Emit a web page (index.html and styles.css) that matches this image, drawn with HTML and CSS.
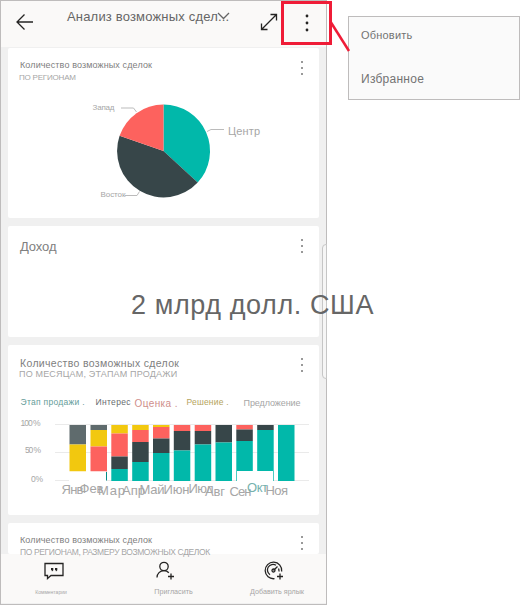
FILE: index.html
```html
<!DOCTYPE html>
<html lang="ru">
<head>
<meta charset="utf-8">
<title>Анализ возможных сделок</title>
<link rel="stylesheet" href="styles.css">
</head>
<body>
<div class="stage">
  <main class="phone">
    <header class="topbar">
      <svg class="back" width="18" height="18" viewBox="0 0 18 18"><path d="M17 9H1.500M8.500 1.500L1 9l7.500 7.500"/></svg>
      <h1>Анализ возможных сдел...</h1>
      <svg class="chevron" width="13" height="8" viewBox="0 0 13 8"><path d="M1 1l5.500 5.500L12 1"/></svg>
      <svg class="expand" width="18" height="18" viewBox="0 0 18 18"><path d="M1.500 16.500l15-15M10.500 1.500h6v6M1.500 10.500v6h6"/></svg>
      <svg class="more-top" width="4" height="18" viewBox="0 0 4 18"><circle cx="2" cy="2" r="1.400"/><circle cx="2" cy="9" r="1.400"/><circle cx="2" cy="16" r="1.400"/></svg>
    </header>
    <section class="feed">
      <article class="card card-pie">
        <div class="card-head">
          <div class="titles"><h2 class="t-small">Количество возможных сделок</h2><p class="s-region">ПО РЕГИОНАМ</p></div>
          <div class="dots"><i></i><i></i><i></i></div>
        </div>
        <svg class="pie" width="311" height="120" viewBox="8 90 311 120">
          <path fill="#01b8aa" d="M163.500 151V104.500A46.500 46.500 0 0 1 197.700 182.500Z"/>
          <path fill="#374649" d="M163.500 151L197.700 182.500A46.500 46.500 0 0 1 119.600 135.800Z"/>
          <path fill="#fd625e" d="M163.500 151L119.600 135.800A46.500 46.500 0 0 1 163.500 104.500Z"/>
          <g class="leader"><path d="M121 108h12.500l3 4M207 131.500l4-2h13M125 195.500h12l2.500-4"/></g>
          <text x="92.500" y="110" font-size="8" textLength="22">Запад</text>
          <text x="228" y="134.500" font-size="11" textLength="32">Центр</text>
          <text x="100.500" y="197" font-size="8" textLength="25">Восток</text>
        </svg>
      </article>
      <article class="card card-income">
        <div class="card-head">
          <div class="titles"><h2 class="t-income">Доход</h2></div>
          <div class="dots"><i></i><i></i><i></i></div>
        </div>
        <p class="income">2 млрд долл. США</p>
      </article>
      <article class="card card-bars">
        <div class="card-head">
          <div class="titles"><h2 class="t-bars">Количество возможных сделок</h2><p class="s-bars">ПО МЕСЯЦАМ, ЭТАПАМ ПРОДАЖИ</p></div>
          <div class="dots"><i></i><i></i><i></i></div>
        </div>
        <svg class="bars" width="311" height="120" viewBox="8 390 311 120">
          <text class="c-stage" x="20.500" y="405" font-size="8.500" textLength="64">Этап продажи .</text>
          <text class="c-interest" x="95.500" y="405" font-size="8.500" textLength="35">Интерес</text>
          <text class="c-rate" x="134.500" y="407" font-size="10" textLength="43">Оценка .</text>
          <text class="c-decision" x="186.500" y="405" font-size="8.500" textLength="42">Решение .</text>
          <text x="243.500" y="406" font-size="9" textLength="57">Предложение</text>
          <path stroke="#eaeaea" d="M55 424.500H309M55 452.500H309M55 480.500H309"/>
          <path fill="#5f6b6d" d="M69.500 425h16.500v19.500h-16.500zM90.500 425h16.500v5h-16.500z"/>
          <path fill="#f2c80f" d="M69.500 444.500h16.500v27h-16.500zM90.500 430h16.500v16.500h-16.500zM111.300 425h16.500v8.500h-16.500zM132.200 425h16.500v5h-16.500zM153 425h16.500v2h-16.500z"/>
          <path fill="#fd625e" d="M90.500 446.500h16.500v25h-16.500zM111.300 433.500h16.500v23h-16.500zM132.200 430h16.500v12h-16.500zM153 427h16.500v11.500h-16.500zM173.800 425h16.500v6h-16.500zM194.700 425h16.500v6h-16.500zM236.300 425h16.500v4.500h-16.500z"/>
          <path fill="#374649" d="M111.300 456.500h16.500v12.500h-16.500zM132.200 442h16.500v20h-16.500zM153 438.500h16.500v14.500h-16.500zM173.800 431h16.500v19.500h-16.500zM194.700 431h16.500v13.500h-16.500zM215.500 425h16.500v17.500h-16.500zM236.300 429.500h16.500v11.500h-16.500zM257.200 425h16.500v5h-16.500z"/>
          <path fill="#01b8aa" d="M111.300 469h16.500v12h-16.500zM132.200 462h16.500v19h-16.500zM153 453h16.500v28h-16.500zM173.800 450.500h16.500v30.500h-16.500zM194.700 444.500h16.500v36.500h-16.500zM215.500 442.500h16.500v38.500h-16.500zM236.300 441h16.500v40h-16.500zM257.200 430h16.500v51h-16.500zM278 425h16.500v56h-16.500z"/>
          <path fill="#fff" d="M69 471.500h37v10H69zM237 471h36v11h-36z"/>
          <path stroke="#018d87" d="M106.500 472v8.500"/>
          <g font-size="8.500"><text x="20.500" y="426" textLength="20">100 %</text><text x="25" y="453" textLength="16">50 %</text><text x="31" y="482" textLength="12">0 %</text></g>
          <g class="months" font-size="13">
            <text x="61.500" y="494" textLength="22">Янв</text><text x="79.500" y="493" textLength="24">Фев</text>
            <text x="98" y="495" textLength="27">Мар</text><text x="122" y="495" textLength="23">Апр</text>
            <text x="139.500" y="494" textLength="25">Май</text><text x="163.500" y="493.500" textLength="26">Июн</text>
            <text x="188.500" y="493" textLength="25">Июл</text><text x="205" y="496" textLength="20">Авг</text>
            <text x="229.500" y="496" textLength="22">Сен</text><text class="c-oct" x="247" y="492" textLength="21">Окт</text>
            <text x="265.500" y="495" textLength="22.500">Ноя</text>
          </g>
        </svg>
      </article>
      <article class="card card-last">
        <div class="card-head">
          <div class="titles"><h2 class="t-small">Количество возможных сделок</h2><p class="s-last">ПО РЕГИОНАМ, РАЗМЕРУ ВОЗМОЖНЫХ СДЕЛОК</p></div>
          <div class="dots"><i></i><i></i><i></i></div>
        </div>
      </article>
    </section>
    <footer class="tabs">
      <div class="tab tab-comment">
        <svg width="20" height="20" viewBox="0 0 20 20"><path d="M1 2.500h18v12H7L3.500 17.500v-3H1z"/><path class="ink" d="M7 7h2.300v2.200L8 10.500 7.500 9H7zM11 7h2.300v2.200L12 10.500 11.500 9H11z"/></svg>
        <span>Комментарии</span>
      </div>
      <div class="tab tab-invite">
        <svg width="20" height="20" viewBox="0 0 20 20"><circle cx="9" cy="5.500" r="4.200"/><path d="M2 16.500c0-4 3-6.800 7-6.800 2 0 3.500.6 4.800 2M16 12.500v6M13 15.500h6"/></svg>
        <span>Пригласить</span>
      </div>
      <div class="tab tab-shortcut">
        <svg width="20" height="20" viewBox="0 0 20 20"><path d="M10.500 17.700A8.300 8.300 0 1 1 17.700 10.500M6 13.700A5.500 5.500 0 0 1 12 4.300M14.500 7.500c.5 1 .6 2 .4 3M9.500 9.500l4-4M16 12.500v6M13 15.500h6"/><circle cx="9.500" cy="9.500" r="1.500"/></svg>
        <span>Добавить ярлык</span>
      </div>
    </footer>
    <div class="edge"></div>
  </main>
  <aside class="menu"><span class="m-refresh">Обновить</span><span class="m-fav">Избранное</span></aside>
  <svg class="callout" width="80" height="55" viewBox="280 0 80 55"><rect x="282.500" y="2.500" width="48" height="41" stroke-width="3"/><path d="M331 22.500L349 51" stroke-width="2.500"/></svg>
</div>
</body>
</html>
```

FILE: styles.css
```css
* { box-sizing: border-box; }
body { margin: 0; background: #fff; font-family: "Liberation Sans", Arial, sans-serif; color: #a6a6a6; }
h1, h2, p { margin: 0; font-weight: 400; white-space: nowrap; }
svg { display: block; flex: none; }
text { fill: #a6a6a6; }
.c-stage { fill: #659c99; }
.c-interest { fill: #686d70; }
.c-rate { fill: #cf8e8b; }
.c-decision { fill: #b5a45d; }
.c-oct { fill: #75b2ae; }

.stage { position: relative; display: flex; align-items: flex-start; width: 520px; height: 605px; }
.phone { position: relative; display: flex; flex-direction: column; width: 327px; height: 605px; border: 1px solid #bebcbc; background: #f0f0f0; }

.topbar { display: flex; flex: none; height: 46px; background: #faf9f8; }
.topbar svg { fill: none; stroke: #252423; stroke-width: 1.3; }
.back { margin: 12px 0 0 15px; }
h1 { width: 149px; margin: 7px 0 0 33px; font-size: 13px; line-height: 17px; letter-spacing: .18px; color: #666; }
.chevron { margin: 11px 0 0 1px; }
.topbar .chevron { stroke: #666; }
.expand { margin: 12px 0 0 30px; }
.more-top { margin: 13px 0 0 27px; }
.topbar .more-top { fill: #252423; stroke: none; }

.feed { display: flex; flex-direction: column; flex: none; gap: 8px; height: 507px; padding: 1px 7px 0; }
.card { flex: none; background: #fff; border-radius: 2px; }
.card-pie { height: 170px; }
.card-income { height: 111px; }
.card-bars { height: 170px; }
.card-last { height: 31px; }
.card-head { display: flex; justify-content: space-between; height: 42px; padding: 0 16px 0 12px; }
h2 { color: #808080; }
.dots { display: flex; flex-direction: column; gap: 4px; padding-top: 13px; }
.dots i { width: 2px; height: 2px; background: #999; }
.t-small { margin-top: 11px; font-size: 9px; line-height: 12px; letter-spacing: .12px; }
.s-region { margin: 1px 0 0 -1px; font-size: 8px; line-height: 12px; letter-spacing: -.2px; }
.t-income { margin-top: 13px; font-size: 13px; line-height: 16px; letter-spacing: -.1px; }
.income { position: relative; z-index: 2; margin: 22px 0 0 123px; font-size: 27px; line-height: 31px; letter-spacing: .6px; color: #666; }
.t-bars { margin-top: 11px; font-size: 10.500px; line-height: 14px; letter-spacing: .33px; }
.s-bars { margin-left: -1px; font-size: 9px; line-height: 9px; letter-spacing: .18px; }
.s-last { position: relative; z-index: 2; font-size: 8.500px; line-height: 12px; letter-spacing: -.38px; }
.leader { fill: none; stroke: #bbb; }
.bars { margin-top: 3px; }

.tabs { display: flex; flex: none; height: 49px; background: #faf9f8; }
.tab { display: flex; flex-direction: column; align-items: center; gap: 6px; padding-top: 7px; font-size: 7.200px; line-height: 10px; white-space: nowrap; }
.tab svg { fill: none; stroke: #252423; stroke-width: 1.300; }
.tab svg .ink { fill: #252423; stroke: none; }
.tab-comment { width: 106px; font-size: 5px; }
.tab-comment span { margin-left: -6px; }
.tab-invite { width: 133px; }
.tab-invite svg { margin-left: -18px; }
.tab-shortcut { width: 74px; }
.tab-shortcut svg { margin-left: -7px; }
.edge { position: absolute; right: -1px; top: 243px; width: 5px; height: 135px; border: 1px solid #c6c6c6; border-radius: 4px 0 0 4px; background: #f6f6f6; }

.menu { display: flex; flex-direction: column; width: 172px; height: 84px; margin: 16px 0 0 21px; padding: 10px 0 0 12px; background: #fafafa; border: 1px solid #bebcbc; font-size: 11px; color: #737373; }
.m-refresh { line-height: 16px; letter-spacing: .2px; }
.m-fav { margin-top: 27px; font-size: 12px; line-height: 18px; letter-spacing: .25px; }
.callout { position: absolute; left: 280px; top: 0; fill: none; stroke: #ef1c37; }
```
